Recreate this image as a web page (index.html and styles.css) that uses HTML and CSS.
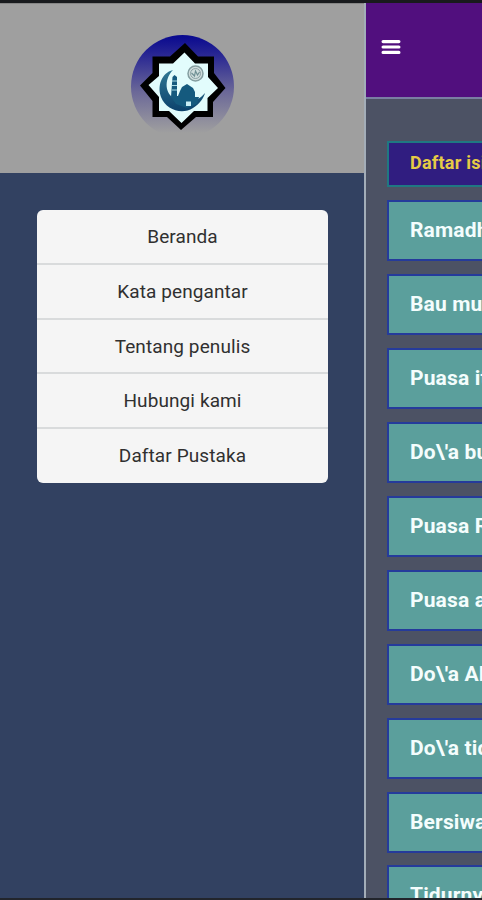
FILE: index.html
```
<!DOCTYPE html>
<html lang="id">
  <head>
    <meta charset="UTF-8" />
    <meta name="viewport" content="width=device-width, initial-scale=1.0" />
    <title>Ramadhan</title>
    <link rel="stylesheet" href="styles.css">
  </head>
  <body>
    <div class="app">
      <aside class="sidebar">
        <div class="sidebar-header">
          <svg class="logo" viewBox="0 0 104 104">
            <defs>
              <linearGradient id="sky" x1="0" y1="0" x2="0" y2="1">
                <stop offset="0" stop-color="#08088f" />
                <stop offset="0.2" stop-color="#2a2893" />
                <stop offset="0.55" stop-color="#6b6898" />
                <stop offset="0.95" stop-color="#9f9f9f" />
              </linearGradient>
              <linearGradient id="moon" x1="0" y1="0" x2="0" y2="1">
                <stop offset="0" stop-color="#2f7894" />
                <stop offset="1" stop-color="#0d426c" />
              </linearGradient>
            </defs>
            <circle cx="52.500" cy="51.500" r="51.500" fill="url(#sky)" />
            <path fill="#000" d="M55 8 68 21.500H84V38L95.500 53 83 67V82H66L51 95 37 82H22.500V66L10 50.500 22.500 38V21.500H40Z" />
            <path fill="#e2fcfc" d="M54.500 17.500 65 28.500H78V42L88 53 77.500 63V76H64L51.500 88 39 76H29V62L18.500 50 29 41V28.500H43Z" />
            <path fill="url(#moon)" d="M43 35C31 38 27 52 31 62 36 75 52 80 63 73 70 69 74 62 75 58 67 68 53 70 43 63 34 56 35 43 43 35Z" />
            <path fill="#155a7e" d="M42.500 42 44.500 40 47 42V61H48L50 56 52 52 57 49 63 53 65 57V62H69L67 69 57 73 46 69 41 62Z" />
            <path stroke="#a9dbe5" stroke-width="1" d="M42 46h5M42 50.500h5M42 55h5" />
            <path fill="#c9eef5" d="M56 66.500h5V71h-5Z" />
            <circle cx="65.500" cy="38.500" r="7.500" fill="#cfdddd" stroke="#849ea0" stroke-width="1.500" />
            <circle cx="65.500" cy="38.500" r="5" fill="none" stroke="#8ba3a5" />
            <path fill="none" stroke="#6e8f93" stroke-width="1.200" d="m61.500 38 3 3 1-5 2 4 2-3" />
          </svg>
        </div>
        <nav class="menu">
          <a class="menu-item">Beranda</a>
          <a class="menu-item">Kata pengantar</a>
          <a class="menu-item">Tentang penulis</a>
          <a class="menu-item">Hubungi kami</a>
          <a class="menu-item">Daftar Pustaka</a>
        </nav>
      </aside>
      <main class="page">
        <header class="navbar">
          <svg class="menu-icon" viewBox="0 0 20 16">
            <path stroke="#fff" stroke-width="3.200" stroke-linecap="round" d="M2.100 2.600h15.800M2.100 8h15.800M2.100 13.400h15.800" />
          </svg>
        </header>
        <div class="content">
          <div class="list-title">Daftar isi</div>
          <div class="list-item">Ramadh</div>
          <div class="list-item">Bau mu</div>
          <div class="list-item">Puasa it</div>
          <div class="list-item">Do\'a bu</div>
          <div class="list-item">Puasa R</div>
          <div class="list-item">Puasa a</div>
          <div class="list-item">Do\'a Al</div>
          <div class="list-item">Do\'a tid</div>
          <div class="list-item">Bersiwa</div>
          <div class="list-item">Tidurny</div>
        </div>
      </main>
    </div>
  </body>
</html>
```

FILE: styles.css
```
* {
  box-sizing: border-box;
}

body {
  margin: 0;
  font-family: Roboto, sans-serif;
}

.app {
  display: flex;
  height: 900px;
  overflow: hidden;
  border-top: 3px solid #181a1d;
  border-bottom: 2px solid #22252c;
}

.sidebar {
  flex: 0 0 366px;
  background-color: #324161;
  border-right: 2px solid #a3adb8;
}

.sidebar-header {
  display: flex;
  justify-content: center;
  height: 170px;
  padding-top: 31px;
  background-color: #9f9f9f;
  border-top: 1px solid #858585;
}

.logo {
  width: 104px;
  height: 104px;
}

.menu {
  width: 291px;
  margin: 36.5px 0 0 37px;
  background-color: #f5f5f5;
  border-radius: 6px;
  overflow: hidden;
}

.menu-item {
  display: block;
  height: 54.8px;
  line-height: 53px;
  font-size: 19px;
  letter-spacing: 0.1px;
  text-align: center;
  color: #303030;
  border-bottom: 2px solid #d9dbdc;
}

.menu-item:first-child {
  height: 55.4px;
}

.menu-item:last-child {
  height: 54.2px;
  border-bottom: none;
}

.page {
  flex: 1;
  min-width: 0;
  overflow: hidden;
  background-color: #4c5264;
}

.navbar {
  display: flex;
  align-items: center;
  height: 96px;
  padding: 0 0 6px 15px;
  background-color: #510f7e;
  border-bottom: 2px solid #7a7fa3;
}

.menu-icon {
  width: 20px;
  height: 16px;
}

.content {
  padding: 42px 0 0 21px;
  font-weight: bold;
  white-space: nowrap;
}

.list-title {
  height: 46px;
  padding-left: 21px;
  line-height: 40px;
  font-size: 18px;
  letter-spacing: 0.25px;
  color: #e6cb45;
  background-color: #301d80;
  border: 2px solid #1f7882;
  border-right: none;
  margin-bottom: 13px;
}

.list-item {
  height: 61px;
  padding-left: 21px;
  line-height: 57px;
  font-size: 21px;
  letter-spacing: 0.15px;
  color: #f4fdfd;
  background-color: #5b9f9c;
  border: 2px solid #253b9b;
  border-right: none;
  margin-bottom: 12.95px;
}
```
